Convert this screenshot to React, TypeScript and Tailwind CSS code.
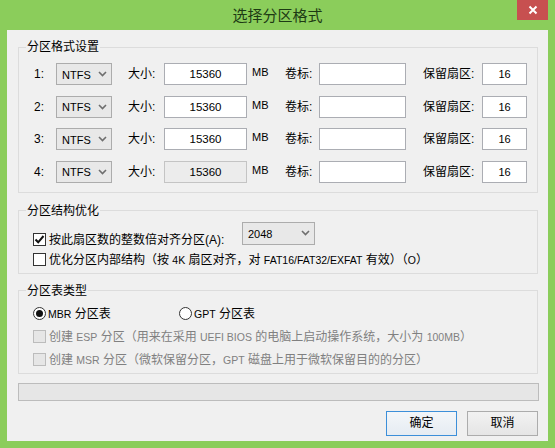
import React from "react";

const FONT = "font-['Liberation_Sans','Noto_Sans_CJK_SC',sans-serif]";

function L({ children }: { children: React.ReactNode }) {
  return <span className="text-[10.5px]">{children}</span>;
}

function Chevron() {
  return (
    <svg width="9" height="6" viewBox="0 0 9 6" className="shrink-0">
      <path d="M1 1 L4.5 4.5 L8 1" fill="none" stroke="#6e6e6e" strokeWidth="1.6" />
    </svg>
  );
}

function Select({ value, w }: { value: string; w: string }) {
  return (
    <div className={`${w} h-full border border-[#acacac] bg-[#e8e8e8] flex items-center justify-between pl-[5px] pr-[4px]`}>
      <span className="text-[11px] mt-[1px]">{value}</span>
      <Chevron />
    </div>
  );
}

function Check({ checked, disabled }: { checked?: boolean; disabled?: boolean }) {
  return (
    <div
      className={`w-[13px] h-[13px] border flex items-center justify-center shrink-0 ${
        disabled ? "border-[#bcbcbc] bg-[#e6e6e6]" : "border-[#333333] bg-white"
      }`}
    >
      {checked && (
        <svg width="11" height="11" viewBox="0 0 11 11">
          <path d="M1.5 5.5 L4.2 8.3 L9.5 2" fill="none" stroke="#111" strokeWidth="2" />
        </svg>
      )}
    </div>
  );
}

function Radio({ checked }: { checked?: boolean }) {
  return (
    <div className="w-[13px] h-[13px] rounded-full border border-[#333333] bg-white flex items-center justify-center shrink-0">
      {checked && <div className="w-[7px] h-[7px] rounded-full bg-[#111]" />}
    </div>
  );
}

function Row({ n, disabled }: { n: number; disabled?: boolean }) {
  return (
    <div className="flex h-[22px] items-center pl-[15px]">
      <div className="w-[22px]">{n}:</div>
      <Select value="NTFS" w="w-[56px]" />
      <div className="w-[16px]" />
      <div className="w-[36px]">大小:</div>
      <div
        className={`w-[83px] h-full border flex items-center justify-center text-[11.5px] ${
          disabled ? "bg-[#ececec] border-[#c4c4c4]" : "bg-white border-[#abadb3]"
        }`}
      >
        15360
      </div>
      <div className="w-[5px]" />
      <div className="w-[33px] self-start mt-[1px] text-[11px]">MB</div>
      <div className="w-[34px]">卷标:</div>
      <div className="w-[87px] h-full border border-[#abadb3] bg-white" />
      <div className="w-[17px]" />
      <div className="w-[59px]">保留扇区:</div>
      <div className="w-[45px] h-full border border-[#abadb3] bg-white flex items-center justify-center text-[11px]">16</div>
    </div>
  );
}

export default function App() {
  return (
    <div className={`w-[555px] h-[448px] bg-[#8bcd5b] flex flex-col text-[12px] text-black leading-[16px] ${FONT}`}>
      <div className="relative h-[30px] flex items-center justify-center text-[15px] text-[#1d3a14]">
        <span className="font-['Noto_Sans_CJK_SC',sans-serif]">选择分区格式</span>
        <div className="absolute right-[7px] top-0 w-[31px] h-[20px] bg-[#c75050] flex items-center justify-center">
          <svg width="10" height="10" viewBox="0 0 10 10">
            <path d="M1.5 1.5 L8.5 8.5 M8.5 1.5 L1.5 8.5" stroke="white" strokeWidth="2" />
          </svg>
        </div>
      </div>
      <div className="mx-[7px] h-[411px] bg-[#f0f0f0] pl-[11px] pr-[10px] pt-[9px] flex flex-col">
        <fieldset className="border border-[#dcdcdc] pb-[9px] flex flex-col">
          <legend className="ml-[7px] px-[1px] h-[16px]">分区格式设置</legend>
          <div className="flex flex-col gap-[10.5px] mt-[8px]">
            <Row n={1} />
            <Row n={2} />
            <Row n={3} />
            <Row n={4} disabled />
          </div>
        </fieldset>

        <fieldset className="mt-[10px] border border-[#dcdcdc] pb-[5px] flex flex-col">
          <legend className="ml-[7px] px-[1px] h-[16px]">分区结构优化</legend>
          <div className="flex items-end mt-[3px] pl-[14px]">
            <div className="flex items-center gap-[2px] h-[16px] w-[209px]">
              <Check checked />
              <span className="ml-[1px]">按此扇区数的整数倍对齐分区(A):</span>
            </div>
            <div className="h-[23px] mb-[3px]">
              <Select value="2048" w="w-[73px]" />
            </div>
          </div>
          <div className="flex items-center gap-[3px] h-[16px] mt-[4px] pl-[14px]">
            <Check />
            <span>
              优化分区内部结构（按 <L>4K</L> 扇区对齐，对 <L>FAT16/FAT32/EXFAT</L> 有效）（<L>O</L>）
            </span>
          </div>
        </fieldset>

        <fieldset className="mt-[9px] border border-[#dcdcdc] pb-[5px] flex flex-col">
          <legend className="ml-[7px] px-[1px] h-[16px]">分区表类型</legend>
          <div className="flex items-center h-[16px] mt-[7px] pl-[14px]">
            <div className="flex items-center gap-[2px] w-[146px]">
              <Radio checked />
              <span>
                <L>MBR</L> 分区表
              </span>
            </div>
            <div className="flex items-center gap-[2px]">
              <Radio />
              <span>
                <L>GPT</L> 分区表
              </span>
            </div>
          </div>
          <div className="flex items-center gap-[3px] h-[16px] mt-[7px] pl-[14px] text-[#808080]">
            <Check disabled />
            <span>
              创建 <L>ESP</L> 分区（用来在采用 <L>UEFI BIOS</L> 的电脑上启动操作系统，大小为 <L>100MB</L>）
            </span>
          </div>
          <div className="flex items-center gap-[3px] h-[16px] mt-[7px] pl-[14px] text-[#808080]">
            <Check disabled />
            <span>
              创建 <L>MSR</L> 分区（微软保留分区，<L>GPT</L> 磁盘上用于微软保留目的的分区）
            </span>
          </div>
        </fieldset>

        <div className="mt-[9px] h-[18px] w-[521px] border border-[#bcbcbc] bg-[#e6e6e6]" />

        <div className="mt-[10px] flex justify-end gap-[10px]">
          <button className="w-[71px] h-[25px] border border-[#3c8fd9] bg-gradient-to-b from-[#f3f6f9] to-[#e6ecf2] flex items-center justify-center">
            确定
          </button>
          <button className="w-[71px] h-[25px] border border-[#acacac] bg-gradient-to-b from-[#f2f2f2] to-[#e5e5e5] flex items-center justify-center">
            取消
          </button>
        </div>
      </div>
    </div>
  );
}
